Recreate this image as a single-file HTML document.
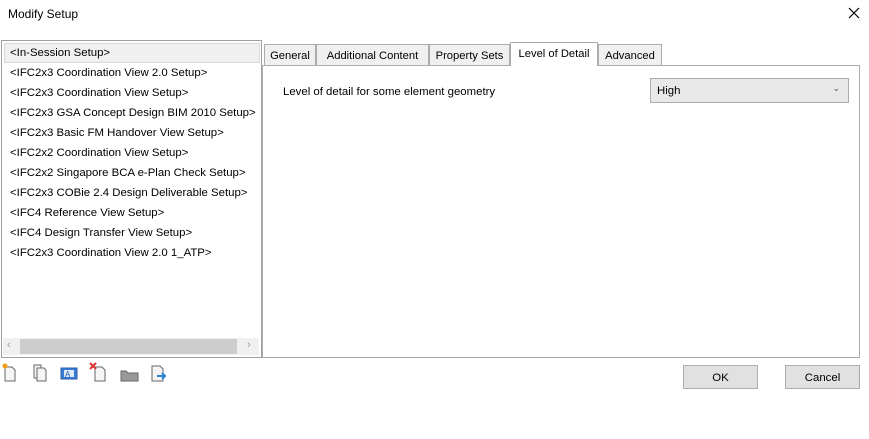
<!DOCTYPE html>
<html><head><style>
*{box-sizing:border-box;margin:0;padding:0}
body{width:869px;height:439px;background:#fff;font-family:"Liberation Sans",sans-serif;font-size:11.4px;color:#000;position:relative;overflow:hidden}
.a{position:absolute}
.title{left:8px;top:7px;font-size:12px}
.list{left:1px;top:40px;width:261px;height:318px;border:1px solid #a0a0a0;background:#fff}
.row{position:absolute;left:8px;white-space:nowrap;margin-top:1px}
.sel{left:2px;top:2px;width:256px;height:20px;background:#f0f0f0;border:1px solid #d9d9d9}
.sb{left:3px;top:338px;width:256px;height:17px;background:#f0f0f0}
.thumb{left:20px;top:339px;width:217px;height:15px;background:#cdcdcd}
.panel{left:262px;top:65px;width:598px;height:293px;border:1px solid #acacac;background:#fff}
.tab{position:absolute;top:44px;height:22px;border:1px solid #acacac;background:#f0f0f0;padding:5px 0 0 0;text-align:center;white-space:nowrap;font-size:11.2px}
.tabs{background:#fff;top:42px;height:24px;border-bottom:none}
.combo{left:650px;top:78px;width:199px;height:25px;border:1px solid #acacac;background:#e8e8e8;padding:6px 6px}
.btn{position:absolute;top:365px;width:75px;height:24px;border:1px solid #adadad;background:#e1e1e1;text-align:center;padding-top:6px}
</style></head><body>
<div class="a title">Modify Setup</div>
<svg class="a" style="left:848px;top:7px" width="12" height="12"><path d="M1 1l10 10M11 1L1 11" stroke="#000" stroke-width="1.2"/></svg>
<div class="a list">
<div class="a sel"></div>
<div class="row" style="top:5px">&lt;In-Session Setup&gt;</div>
<div class="row" style="top:25px">&lt;IFC2x3 Coordination View 2.0 Setup&gt;</div>
<div class="row" style="top:45px">&lt;IFC2x3 Coordination View Setup&gt;</div>
<div class="row" style="top:65px">&lt;IFC2x3 GSA Concept Design BIM 2010 Setup&gt;</div>
<div class="row" style="top:85px">&lt;IFC2x3 Basic FM Handover View Setup&gt;</div>
<div class="row" style="top:105px">&lt;IFC2x2 Coordination View Setup&gt;</div>
<div class="row" style="top:125px">&lt;IFC2x2 Singapore BCA e-Plan Check Setup&gt;</div>
<div class="row" style="top:145px">&lt;IFC2x3 COBie 2.4 Design Deliverable Setup&gt;</div>
<div class="row" style="top:165px">&lt;IFC4 Reference View Setup&gt;</div>
<div class="row" style="top:185px">&lt;IFC4 Design Transfer View Setup&gt;</div>
<div class="row" style="top:205px">&lt;IFC2x3 Coordination View 2.0 1_ATP&gt;</div>
</div>
<div class="a sb"></div><div class="a thumb"></div>
<div class="a" style="left:7px;top:339px;color:#999;font-size:11px">‹</div>
<div class="a" style="left:247px;top:339px;color:#999;font-size:11px">›</div>
<div class="a panel"></div>
<div class="tab" style="left:264px;width:52px">General</div>
<div class="tab" style="left:316px;width:113px">Additional Content</div>
<div class="tab" style="left:429px;width:81px">Property Sets</div>
<div class="tab tabs" style="left:510px;width:88px;padding-top:5px">Level of Detail</div>
<div class="tab" style="left:598px;width:64px">Advanced</div>
<div class="a" style="left:283px;top:86px">Level of detail for some element geometry</div>
<div class="a combo">High<span style="position:absolute;right:8px;top:4px;font-size:9px;color:#555">⌄</span></div>
<svg class="a" style="left:0;top:362px" width="170" height="24">
<g fill="#f5f5f5" stroke="#666"><path d="M5 5h7l3 3v11H5z"/><path d="M34 3h7v13h-7z"/><path d="M37 6h7l2 2v11h-9z"/><path d="M95 5h7l3 3v11H95z"/><path d="M152 4h8l3 3v12h-11z"/></g>
<circle cx="5" cy="4" r="2.5" fill="#f39c12"/>
<rect x="61" y="6" width="16" height="11" fill="#3a7bd5" stroke="#2a5ea8"/><rect x="64" y="8" width="10" height="7" fill="#dfeaf7"/>
<text x="65" y="15" font-size="8" fill="#2a5ea8" font-family="Liberation Sans">A</text>
<path d="M90 1l6 6M96 1l-6 6" stroke="#d33" stroke-width="2"/>
<path d="M121 9h5l2 2h10v8h-17z" fill="#999" stroke="#666"/>
<path d="M157 14h8M162 11l3 3-3 3" stroke="#2a7ed3" stroke-width="2" fill="none"/>
</svg>
<div class="btn" style="left:683px">OK</div>
<div class="btn" style="left:785px">Cancel</div>
</body></html>
